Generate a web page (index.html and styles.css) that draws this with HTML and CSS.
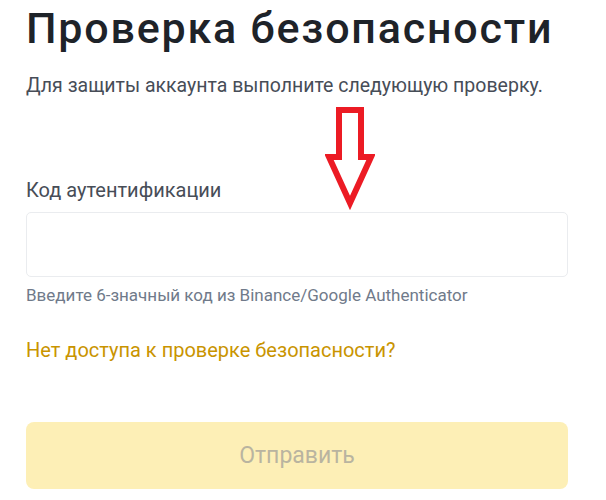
FILE: index.html
```html
<!DOCTYPE html>
<html lang="ru">
<head>
<meta charset="utf-8">
<link rel="stylesheet" href="styles.css">
</head>
<body>
<main class="page">
  <h1 class="title">Проверка безопасности</h1>
  <p class="subtitle">Для защиты аккаунта выполните следующую проверку.</p>
  <label class="label" for="code">Код аутентификации</label>
  <input class="field" id="code" type="text">
  <p class="hint">Введите 6-значный код из Binance/Google Authenticator</p>
  <a class="link" href="#">Нет доступа к проверке безопасности?</a>
  <button class="submit" type="button" disabled>Отправить</button>
  <svg class="arrow" width="50" height="106" viewBox="0 0 50 106" aria-hidden="true">
    <path d="M14 5 H36 V52 H46 L25 98 L4 52 H14 Z" fill="#fff" stroke="#ec1b24" stroke-width="6" stroke-linejoin="miter" stroke-miterlimit="6"/>
  </svg>
</main>
</body>
</html>
```
FILE: styles.css
```css
html, body {
  margin: 0;
  padding: 0;
  background: #ffffff;
}
body {
  font-family: Roboto, "Noto Sans", "Liberation Sans", sans-serif;
  color: #1e2329;
}
.page {
  position: relative;
  width: 542px;
  padding: 3px 0 0 26px;
  display: flex;
  flex-direction: column;
}
.title {
  margin: 0;
  font-size: 43px;
  line-height: 50px;
  font-weight: 500;
  color: #1e2329;
  letter-spacing: 1.8px;
  white-space: nowrap;
}
.subtitle {
  margin: 20px 0 0;
  font-size: 19.5px;
  line-height: 26px;
  color: #474d57;
  white-space: nowrap;
}
.label {
  margin-top: 78px;
  font-size: 20px;
  line-height: 26px;
  color: #474d57;
}
.field {
  margin-top: 9px;
  box-sizing: border-box;
  width: 542px;
  height: 65px;
  border: 1px solid #eaecef;
  border-radius: 5px;
  background: #fff;
  outline: none;
}
.hint {
  margin: 7px 0 0;
  font-size: 17px;
  line-height: 22px;
  color: #707a8a;
  white-space: nowrap;
}
.link {
  margin-top: 31px;
  font-size: 20px;
  line-height: 26px;
  color: #c99400;
  text-decoration: none;
  align-self: flex-start;
}
.submit {
  margin-top: 59px;
  width: 542px;
  height: 67px;
  border: none;
  border-radius: 8px;
  background: #fdefb6;
  color: #b9b4a0;
  font-family: Roboto, "Noto Sans", "Liberation Sans", sans-serif;
  font-size: 23px;
  font-weight: 400;
}
.arrow {
  position: absolute;
  left: 325px;
  top: 105px;
}
```
